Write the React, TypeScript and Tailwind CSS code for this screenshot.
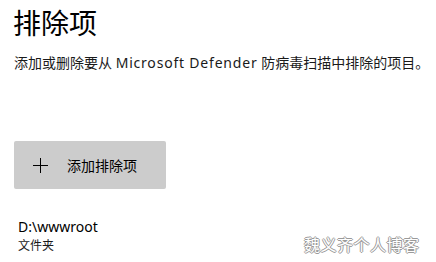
const App = () => {
  return (
    <div
      className="w-[436px] h-[262px] bg-white overflow-hidden text-black relative"
      style={{ fontFamily: '"Noto Sans", "Noto Sans CJK SC", sans-serif' }}
    >
      <div className="flex flex-col pl-[14px]">
        <h1 className="text-[28px] leading-[36px] mt-[5px] -ml-[1px] font-normal">排除项</h1>
        <p className="text-[14px] leading-[20px] mt-[12px] text-[#1a1a1a]">
          添加或删除要从 <span className="tracking-[0.8px]">Microsoft Defender</span> 防病毒扫描中排除的项目。
        </p>
        <button className="mt-[68px] w-[152px] h-[48px] bg-[#cccccc] rounded-[2px] flex items-center text-[14px]">
          <svg width="15" height="15" viewBox="0 0 15 15" className="ml-[19px]">
            <path d="M7.5 0V15M0 7.5H15" stroke="#000" strokeWidth="1" />
          </svg>
          <span className="ml-[19px]">添加排除项</span>
        </button>
        <div className="mt-[29px] pl-[4px] flex flex-col">
          <span className="text-[14px] leading-[18px]">D:\wwwroot</span>
          <span className="text-[12px] leading-[18px] mt-[1px] text-[#1a1a1a]">文件夹</span>
        </div>
      </div>
      <div
        className="absolute left-[304px] top-[235px] text-[16px] leading-[20px] text-white tracking-[0.5px]"
        style={{
          textShadow:
            "1px 0 0 #9a9a9a, -1px 0 0 #9a9a9a, 0 1px 0 #9a9a9a, 0 -1px 0 #9a9a9a",
        }}
      >
        魏义齐个人博客
      </div>
    </div>
  )
}

export default App
